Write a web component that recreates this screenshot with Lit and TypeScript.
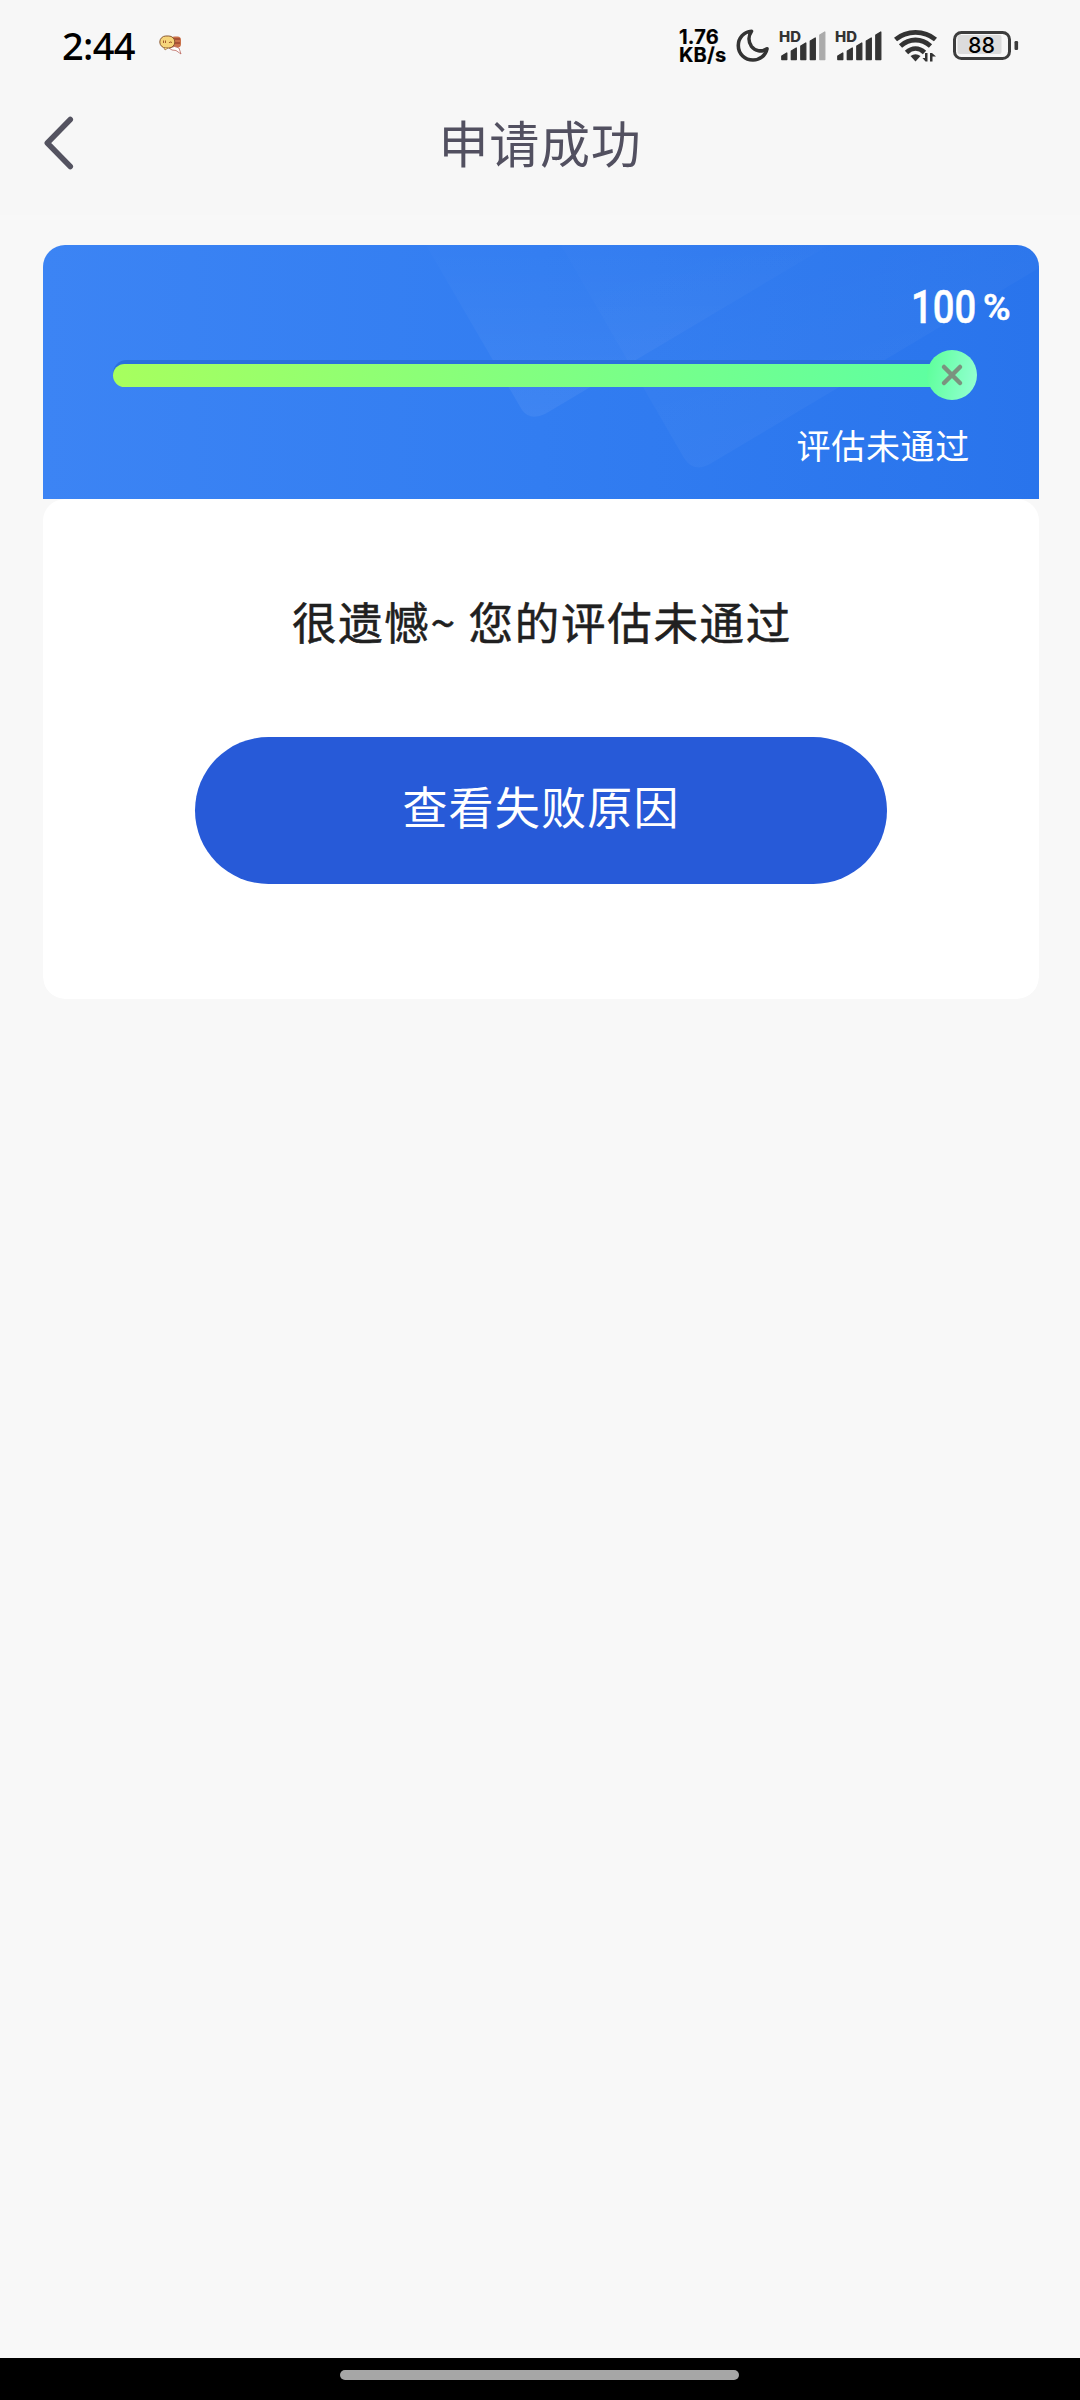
import { LitElement, html, css, svg } from "lit";
import { customElement, property } from "lit/decorators.js";

@customElement("signal-bars")
class SignalBars extends LitElement {
  @property({ type: Number }) level = 5;
  static styles = css`
    :host { display: block; width: 50px; height: 34px; }
    svg { display: block; overflow: visible; }
    .hd { font: 800 14px Inter, "Liberation Sans", sans-serif; fill: #333; }
  `;
  render() {
    const tops = [25, 20, 15, 10, 4];
    return html`<svg width="50" height="34" viewBox="0 0 50 34">
      <text class="hd" x="0" y="14" textLength="22" lengthAdjust="spacingAndGlyphs">HD</text>
      ${tops.map((t, i) => {
        const x = 2.8 + i * 9.5;
        return svg`<path d="M${x} ${t + 3}L${x + 5} ${t}V31.500H${x}Z" stroke-linejoin="round" stroke-width="1.300"
          stroke=${i < this.level ? "#333" : "#ababab"} fill=${i < this.level ? "#333" : "#ababab"}></path>`;
      })}
    </svg>`;
  }
}

@customElement("status-bar")
class StatusBar extends LitElement {
  static styles = css`
    :host { display: block; font-family: Inter, "Liberation Sans", sans-serif; }
    .bar { display: flex; align-items: flex-start; height: 90px; box-sizing: border-box; padding: 28px 60px 0 62px; }
    svg { display: block; flex: none; }
    .time { font: 500 38px/34px "Noto Sans", sans-serif; letter-spacing: -0.7px; color: #000; width: 97px; }
    .spring { flex: 1; }
    .net { font: 700 20px/18px Inter, sans-serif; letter-spacing: 0.2px; color: #000; width: 55px; margin: 0 1px 0 0; white-space: pre; -webkit-text-stroke: 0.2px #000; }
    .moon { margin-left: 1px; }
    signal-bars { margin-left: 9px; }
    signal-bars + signal-bars { margin-left: 6px; }
    .wifi { margin-left: 9px; }
    .batt { margin-left: 14px; }
    .pct { font: 500 22px Inter, sans-serif; fill: #000; }
  `;
  render() {
    return html`<div class="bar">
      <div class="time">2:44</div>
      <svg width="24" height="30" viewBox="0 0 24 30">
        <rect x="12" y="8.500" width="10" height="11" rx="3.500" fill="#c9714a"></rect>
        <path d="M14 11H21M15 15H21" stroke="#8a3325" stroke-width="1"></path>
        <path d="M10 20Q16 17 20 20L22 26L17 22.500L13 22Z" fill="#fff" stroke="#b3544a" stroke-width=".7"></path>
        <rect x=".8" y="8" width="15" height="12" rx="6" fill="#f6d57b" stroke="#8a5932" stroke-width="1"></rect>
        <path d="M4.500 12.500V15M6.500 12.500V15M10 15Q10.500 13 13 14.500" fill="none" stroke="#a25a2c" stroke-width="1"></path>
        <path d="M5 20L6 22L9 20" fill="#f6d57b" stroke="#8a5932" stroke-width=".6"></path>
      </svg>
      <div class="spring"></div>
      <div class="net">1.76
KB/s</div>
      <svg class="moon" width="34" height="36" viewBox="0 0 34 36">
        <path d="M15.500 3.200C8 3.500 2.300 10 2.300 17.500C2.300 26 9 32 17 32C24 32 29.500 27.500 31 20.800C25.500 24.500 19 23 15.500 18.500C12 13.500 12.500 7.500 15.500 3.200Z"
          fill="none" stroke="#333" stroke-width="3.600" stroke-linejoin="round"></path>
      </svg>
      <signal-bars .level=${4}></signal-bars>
      <signal-bars .level=${5}></signal-bars>
      <svg class="wifi" width="44" height="36" viewBox="0 0 44 36">
        <g fill="none" stroke="#333" stroke-width="4.800">
          <path d="M1.500 11.500C13 2 30 2 41.500 11.500"></path>
          <path d="M6.500 18C15.500 10 27.500 10 36.500 18"></path>
          <path d="M12.500 24.500C18 19.300 25 19.300 30.500 24.500"></path>
        </g>
        <path d="M16.500 28Q21.500 24.500 26.500 28L21.500 33.500Z" fill="#333"></path>
        <path d="M33.500 25V33.500H31.500L28.500 30H31V25ZM36 33.500V25H38L42 28.500H38.500V33.500Z" fill="#333"></path>
      </svg>
      <svg class="batt" width="68" height="36" viewBox="0 0 68 36">
        <rect x="5.500" y="7" width="44" height="19" rx="2" fill="#dcdcdc"></rect>
        <rect x="2.500" y="4.500" width="55" height="26" rx="7" fill="none" stroke="#3d3d3d" stroke-width="3"></rect>
        <rect x="62.500" y="13" width="3.600" height="9" rx="1.200" fill="#3d3d3d"></rect>
        <text class="pct" x="29.500" y="25.300" text-anchor="middle" textLength="27" lengthAdjust="spacingAndGlyphs">88</text>
      </svg>
    </div>`;
  }
}

@customElement("app-root")
class AppRoot extends LitElement {
  @property({ type: Number }) progress = 100;
  static styles = css`
    :host { display: block; font-family: "Noto Sans CJK SC", sans-serif; }
    .screen { width: 1080px; height: 2400px; display: flex; flex-direction: column; background: #f8f8f8; overflow: hidden; }
    .top { background: #f7f7f7; height: 215px; }
    .nav { display: grid; grid-template-columns: 90px 1fr 90px; height: 106px; align-items: center; }
    .back { display: block; margin-left: 40px; }
    .title { text-align: center; font-size: 50px; line-height: 60px; color: #525060; letter-spacing: 0.8px; padding-bottom: 5px; }
    .main { flex: 1; padding: 30px 41px 0 43px; }
    .card { height: 754px; border-radius: 22px; overflow: hidden; }
    .hero { position: relative; height: 254px; background: linear-gradient(90deg, #3c84f4, #327df1 50%, #2974ec); }
    .decor { position: absolute; inset: 0; }
    .content { position: relative; display: flex; flex-direction: column; }
    .value { height: 105px; box-sizing: border-box; padding: 36px 28px 0 0; display: flex; justify-content: flex-end; color: #fff; font-family: Roboto, sans-serif; font-weight: 500; }
    .num { width: 72px; height: 54px; }
    .num span { display: inline-block; font-size: 45.500px; line-height: 54px; transform: scaleX(0.84); transform-origin: 0 50%; -webkit-text-stroke: 0.5px #fff; }
    .unit { width: 28px; font-size: 36px; line-height: 55px; -webkit-text-stroke: 0.6px #fff; }
    .unit span { display: inline-block; transform: scaleX(1.04); transform-origin: 0 50%; }
    .line { display: flex; align-items: center; height: 50px; padding-left: 70px; }
    .track { width: 832px; height: 27px; border-radius: 14px; background: #2a70dc; display: flex; align-items: flex-end; margin: -3px -17px 0 0; }
    .fill { height: 23px; border-radius: 12px; background: linear-gradient(90deg, #a7ff5e, #5dffa2); }
    .knob { display: block; flex: none; margin-left: -1px; }
    .state { text-align: right; padding: 23px 69px 0 0; color: #fff; font-size: 34px; line-height: 44px; letter-spacing: 0.700px; }
    .body { height: 500px; box-sizing: border-box; background: #fff; border-radius: 22px; display: flex; flex-direction: column; align-items: center; padding-top: 92px; }
    .message { font-size: 44.500px; line-height: 60px; color: #202020; letter-spacing: 1.700px; white-space: pre; padding-left: 2px; -webkit-text-stroke: 0.500px #202020; }
    .btn { margin: 86px 0 0; width: 692px; height: 147px; border: 0; border-radius: 74px; background: #275ad8; color: #fff; font: 400 45px/60px "Noto Sans CJK SC", sans-serif; letter-spacing: 1.200px; padding: 0 0 9px; }
    .home { background: #000; height: 42px; display: flex; justify-content: center; align-items: flex-start; box-sizing: border-box; padding: 12px 2px 0 0; }
    .pill { width: 399px; height: 10px; border-radius: 5px; background: #a6a6a6; }
  `;
  render() {
    return html`<div class="screen">
      <div class="top">
        <status-bar></status-bar>
        <div class="nav">
          <svg class="back" width="40" height="60" viewBox="0 0 40 60">
            <path d="M30.300 6.500L7.300 30L30.300 53.500" fill="none" stroke="#545360" stroke-width="5.500" stroke-linecap="round" stroke-linejoin="round"></path>
          </svg>
          <div class="title">申请成功</div>
        </div>
      </div>
      <div class="main">
        <div class="card">
          <div class="hero">
            <svg class="decor" width="996" height="254" viewBox="0 0 996 254">
              <defs>
                <linearGradient id="a" gradientUnits="userSpaceOnUse" x1="490" y1="172" x2="490" y2="0">
                  <stop offset="0" stop-color="#fff" stop-opacity=".06"></stop>
                  <stop offset="1" stop-color="#fff" stop-opacity=".008"></stop>
                </linearGradient>
                <linearGradient id="b" gradientUnits="userSpaceOnUse" x1="655" y1="225" x2="600" y2="20">
                  <stop offset="0" stop-color="#fff" stop-opacity=".035"></stop>
                  <stop offset="1" stop-color="#fff" stop-opacity=".01"></stop>
                </linearGradient>
              </defs>
              <path d="M383 0L479 165Q487 176 502 169L786 0Z" fill="url(#a)"></path>
              <path d="M518 0L641 213Q650 228 667 219L996 23V0Z" fill="url(#b)"></path>
            </svg>
            <div class="content">
              <div class="value">
                <div class="num"><span>${this.progress}</span></div>
                <div class="unit"><span>%</span></div>
              </div>
              <div class="line">
                <div class="track"><div class="fill" style="width:${this.progress}%"></div></div>
                <svg class="knob" width="50" height="50" viewBox="0 0 50 50">
                  <defs><linearGradient id="k" x1="0" y1=".4" x2="1" y2=".6">
                    <stop offset="0" stop-color="#5fff9c"></stop><stop offset="1" stop-color="#92ffd0"></stop>
                  </linearGradient></defs>
                  <circle cx="25" cy="25" r="25" fill="url(#k)"></circle>
                  <path d="M17 17L33 33M33 17L17 33" stroke="#7b937f" stroke-width="4.500" stroke-linecap="round"></path>
                </svg>
              </div>
              <div class="state">评估未通过</div>
            </div>
          </div>
          <div class="body">
            <div class="message">很遗憾~ 您的评估未通过</div>
            <button class="btn">查看失败原因</button>
          </div>
        </div>
      </div>
      <div class="home"><div class="pill"></div></div>
    </div>`;
  }
}
